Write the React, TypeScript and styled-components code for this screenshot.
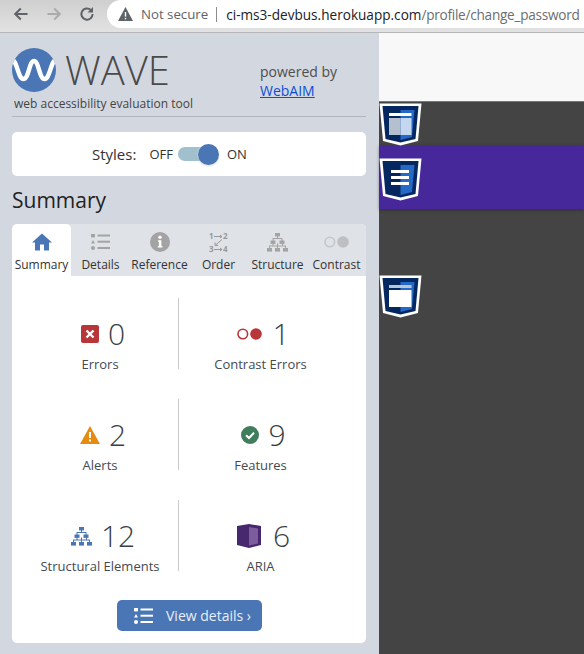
import React from 'react';
import styled, { createGlobalStyle } from 'styled-components';

const GlobalStyle = createGlobalStyle`
  html, body {
    margin: 0;
    padding: 0;
    height: 654px;
    overflow: hidden;
    background: #444;
    font-family: "Open Sans", "Liberation Sans", sans-serif;
  }
  * { box-sizing: border-box; }
`;

const TAB_COLOR = '#a3a3a3';
const BLUE = '#4a76b5';

const HomeIcon = () => (
  <svg width="20" height="18" viewBox="0 0 20 18">
    <path d="M10 0.5 L20 9.5 H17 V17.5 H12 V11.5 H8 V17.5 H3 V9.5 H0 Z" fill={BLUE} />
  </svg>
);

const ListIcon = ({ color, size = 19 }: { color: string; size?: number }) => (
  <svg width={size} height={(size * 16) / 19} viewBox="0 0 19 16" fill={color}>
    <rect x="0" y="0" width="4" height="3.4" />
    <path d="M2 6 L4 9.4 H0 Z" />
    <circle cx="2" cy="14" r="2" />
    <rect x="6.5" y="0.5" width="12.5" height="2" />
    <rect x="6.5" y="6.7" width="12.5" height="2" />
    <rect x="6.5" y="13" width="12.5" height="2" />
  </svg>
);

const InfoIcon = () => (
  <svg width="20" height="20" viewBox="0 0 20 20">
    <circle cx="10" cy="10" r="10" fill={TAB_COLOR} />
    <circle cx="10" cy="5.2" r="1.7" fill="#fff" />
    <path d="M8 8.2 H11.4 V14 H12.4 V15.6 H7.8 V14 H8.9 V9.8 H8 Z" fill="#fff" />
  </svg>
);

const OrderIcon = () => (
  <svg width="19" height="25" viewBox="0 -2 19 25">
    <text x="0" y="7" fontSize="8" fontWeight="700" fill="#999" fontFamily="Open Sans">1</text>
    <text x="14" y="7" fontSize="8" fontWeight="700" fill="#999" fontFamily="Open Sans">2</text>
    <text x="0" y="20" fontSize="8" fontWeight="700" fill="#999" fontFamily="Open Sans">3</text>
    <text x="14" y="20" fontSize="8" fontWeight="700" fill="#999" fontFamily="Open Sans">4</text>
    <g stroke="#999" strokeWidth="1" fill="none">
      <path d="M5 4.5 H13 M11 3 L13 4.5 L11 6" />
      <path d="M5 17.5 H13 M11 16 L13 17.5 L11 19" />
      <path d="M13 7.5 L6 13.5 M6 10.5 V13.5 H9" />
    </g>
  </svg>
);

const StructureIcon = ({ color, width = 21 }: { color: string; width?: number }) => (
  <svg width={width} height={(width * 19) / 21} viewBox="0 0 21 19" fill={color}>
    <rect x="8" y="0" width="5" height="3.4" />
    <rect x="3.5" y="7.5" width="5" height="3.4" />
    <rect x="12.5" y="7.5" width="5" height="3.4" />
    <rect x="0" y="15" width="5" height="3.6" />
    <rect x="8" y="15" width="5" height="3.6" />
    <rect x="16" y="15" width="5" height="3.6" />
    <path d="M10 3 H11 V5 H15.5 V8 H14.5 V6 H6.5 V8 H5.5 V5 H10 Z" />
    <path d="M5.5 10.5 H6.5 V12.5 H10 V10.5 H11 V12.5 H15 V10.5 H16 V12.5 H19 V15.5 H18 V13.5 H11 V15.5 H10 V13.5 H3 V15.5 H2 V12.5 H5.5 Z" />
  </svg>
);

const ContrastPair = ({ ring, dot, width }: { ring: string; dot: string; width: number }) => (
  <svg width={width} height={(width * 12) / 25} viewBox="0 0 25 12">
    <circle cx="5.8" cy="6" r="4.8" fill="none" stroke={ring} strokeWidth="1.6" />
    <circle cx="19" cy="6" r="5.8" fill={dot} />
  </svg>
);

const ErrorIcon = () => (
  <svg width="18" height="18" viewBox="0 0 18 18">
    <rect width="18" height="18" rx="2" fill="#b83639" />
    <path d="M5.5 5.5 L12.5 12.5 M12.5 5.5 L5.5 12.5" stroke="#fff" strokeWidth="2.4" />
  </svg>
);

const AlertIcon = () => (
  <svg width="20" height="18" viewBox="0 0 20 18">
    <path d="M10 0 L20 18 H0 Z" fill="#e58b12" />
    <rect x="9" y="6" width="2" height="6" fill="#fff" />
    <rect x="9" y="13.4" width="2" height="2" fill="#fff" />
  </svg>
);

const FeatureIcon = () => (
  <svg width="18" height="18" viewBox="0 0 18 18">
    <circle cx="9" cy="9" r="9" fill="#3f7d5c" />
    <path d="M5 9.2 L8 12 L13 6.8" fill="none" stroke="#fff" strokeWidth="2" />
  </svg>
);

const AriaIcon = () => (
  <svg width="24" height="24" viewBox="0 0 24 24">
    <path d="M0 2 L12 0 L24 2 V21 L12 24 L0 21 Z" fill="#47286f" />
    <path d="M12 3 L21 4.5 V19.5 L12 21.5 Z" fill="#7d5c9e" />
  </svg>
);

const WaveLogo = () => (
  <svg width="44" height="44" viewBox="0 0 44 44">
    <defs>
      <clipPath id="logoClip">
        <circle cx="22" cy="22" r="22" />
      </clipPath>
    </defs>
    <circle cx="22" cy="22" r="22" fill={BLUE} />
    <path
      d="M0 12 C5 12 6 31 11.5 31 C17 31 17 13 22 13 C27 13 27 31 32.5 31 C38 31 39 12 44 12"
      fill="none"
      stroke="#fff"
      strokeWidth="4.5"
      clipPath="url(#logoClip)"
    />
  </svg>
);

const Shield = ({ variant }: { variant: 'split' | 'lines' | 'window' }) => (
  <svg width="43" height="43" viewBox="0 0 43 43">
    <path d="M0.5 0.5 H42.5 L39 38 L21.5 42.5 L4 38 Z" fill="#fff" />
    <path d="M3.5 3 H39.5 L36.5 36 L21.5 39.5 L6.5 36 Z" fill="#04275f" />
    <path d="M21.5 7 H35.5 L33 34 L21.5 37 Z" fill="#2468c8" />
    {variant === 'split' && (
      <>
        <rect x="10" y="10" width="22.5" height="3" fill="#fff" />
        <rect x="10" y="15" width="11.5" height="17" fill="#b5c0cf" />
        <rect x="21.5" y="15" width="11" height="17" fill="#c3d8f0" />
      </>
    )}
    {variant === 'lines' && (
      <>
        <rect x="12" y="12" width="18" height="3" fill="#fff" />
        <rect x="12" y="18" width="18" height="3" fill="#fff" />
        <rect x="12" y="24" width="18" height="3" fill="#fff" />
      </>
    )}
    {variant === 'window' && (
      <>
        <rect x="10" y="10" width="22.5" height="3" fill="#b9c6d6" />
        <rect x="10" y="15" width="22.5" height="17" fill="#fff" />
      </>
    )}
  </svg>
);

const tabs = [
  { label: 'Summary', icon: <HomeIcon /> },
  { label: 'Details', icon: <ListIcon color={TAB_COLOR} /> },
  { label: 'Reference', icon: <InfoIcon /> },
  { label: 'Order', icon: <OrderIcon /> },
  { label: 'Structure', icon: <StructureIcon color={TAB_COLOR} /> },
  { label: 'Contrast', icon: <ContrastPair ring="#c4c7cb" dot="#bdbfc2" width={25} /> },
];

const stats = [
  { icon: <ErrorIcon />, count: 0, label: 'Errors', gap: 9 },
  { icon: <ContrastPair ring="#b83639" dot="#b83639" width={25} />, count: 1, label: 'Contrast Errors', gap: 10 },
  { icon: <AlertIcon />, count: 2, label: 'Alerts', gap: 9 },
  { icon: <FeatureIcon />, count: 9, label: 'Features', gap: 9 },
  { icon: <StructureIcon color={BLUE} />, count: 12, label: 'Structural Elements', gap: 9 },
  { icon: <AriaIcon />, count: 6, label: 'ARIA', gap: 12 },
];

const App = () => (
  <Page>
    <GlobalStyle />
    <BrowserBar>
      <NavIcon viewBox="0 0 16 16">
        <path d="M14.5 8 H2.5 M7.8 2.5 L2.2 8 L7.8 13.5" stroke="#5f6368" />
      </NavIcon>
      <NavIcon viewBox="0 0 16 16">
        <path d="M1.5 8 H13.5 M8.2 2.5 L13.8 8 L8.2 13.5" stroke="#a9abad" />
      </NavIcon>
      <NavIcon viewBox="0 0 16 16">
        <path d="M13.6 8 A5.6 5.6 0 1 1 11.8 3.9" stroke="#5f6368" />
        <path d="M14 1 V6.4 H8.6 Z" fill="#5f6368" />
      </NavIcon>
      <AddressPill>
        <svg width="15" height="14" viewBox="0 0 15 14">
          <path d="M7.5 0 L15 14 H0 Z" fill="#5f6368" />
          <rect x="6.8" y="5" width="1.4" height="4.6" fill="#fff" />
          <rect x="6.8" y="10.8" width="1.4" height="1.5" fill="#fff" />
        </svg>
        <NotSecure>Not secure</NotSecure>
        <PillDivider />
        <Url>
          ci-ms3-devbus.herokuapp.com<UrlPath>/profile/change_password</UrlPath>
        </Url>
      </AddressPill>
    </BrowserBar>
    <Main>
      <Sidebar>
        <Header>
          <Brand>
            <LogoRow>
              <WaveLogo />
              <WaveTitle>WAVE</WaveTitle>
            </LogoRow>
            <Tagline>web accessibility evaluation tool</Tagline>
          </Brand>
          <Powered>
            powered by
            <br />
            <PoweredLink href="#">WebAIM</PoweredLink>
          </Powered>
        </Header>
        <StylesCard>
          <StylesLabel>Styles:</StylesLabel>
          <ToggleText>OFF</ToggleText>
          <Toggle>
            <Knob />
          </Toggle>
          <ToggleText>ON</ToggleText>
        </StylesCard>
        <Heading>Summary</Heading>
        <Panel>
          <TabBar>
            {tabs.map((tab, index) => (
              <Tab key={tab.label} $active={index === 0}>
                <TabIcon>{tab.icon}</TabIcon>
                <TabLabel>{tab.label}</TabLabel>
              </Tab>
            ))}
          </TabBar>
          <StatGrid>
            {stats.map((stat, index) => (
              <Stat key={stat.label} $left={index % 2 === 0}>
                <StatTop $gap={stat.gap}>
                  {stat.icon}
                  <Count>{stat.count}</Count>
                </StatTop>
                <StatLabel>{stat.label}</StatLabel>
              </Stat>
            ))}
          </StatGrid>
          <ButtonRow>
            <DetailsButton>
              <ListIcon color="#fff" />
              View details ›
            </DetailsButton>
          </ButtonRow>
        </Panel>
      </Sidebar>
      <Viewport>
        <TopStrip />
        <PurpleBand />
        <ShieldBadge $top={2}>
          <Shield variant="split" />
        </ShieldBadge>
        <ShieldBadge $top={57}>
          <Shield variant="lines" />
        </ShieldBadge>
        <ShieldBadge $top={174}>
          <Shield variant="window" />
        </ShieldBadge>
      </Viewport>
    </Main>
  </Page>
);

export default App;

const Page = styled.div`
  width: 584px;
  height: 654px;
  display: flex;
  flex-direction: column;
  overflow: hidden;
`;

const BrowserBar = styled.div`
  height: 33px;
  flex: none;
  display: flex;
  align-items: flex-start;
  padding: 6px 0 0 13px;
  gap: 17px;
  background: linear-gradient(#cfcfcf, #e2e2e2);
  border-bottom: 1px solid #b4b6b8;
  overflow: hidden;
`;

const NavIcon = styled.svg`
  width: 16px;
  height: 16px;
  flex: none;
  fill: none;
  stroke-width: 2;
`;

const AddressPill = styled.div`
  flex: none;
  width: 480px;
  height: 28px;
  margin: -6px 0 0 -5px;
  padding: 0 0 0 11px;
  display: flex;
  align-items: center;
  background: #fff;
  border-radius: 14px 0 0 14px;
  white-space: nowrap;
`;

const NotSecure = styled.span`
  color: #5f6368;
  margin-left: 8px;
  font-size: 13.25px;
`;

const PillDivider = styled.span`
  width: 1px;
  height: 15px;
  background: #8a8c8f;
  margin: 0 9px 0 8px;
`;

const Url = styled.span`
  color: #202124;
  font-size: 13.6px;
`;

const UrlPath = styled.span`
  color: #6b6e72;
  letter-spacing: -0.25px;
`;

const Main = styled.div`
  flex: 1;
  display: flex;
  min-height: 0;
`;

const Sidebar = styled.div`
  width: 379px;
  flex: none;
  background: #d3d8e0;
  padding: 15px 13px 0 12px;
`;

const Header = styled.div`
  height: 69px;
  display: flex;
  justify-content: space-between;
  border-bottom: 1px solid #b2b5b9;
`;

const Brand = styled.div`
  display: flex;
  flex-direction: column;
`;

const LogoRow = styled.div`
  display: flex;
  align-items: center;
  gap: 9px;
  height: 44px;
`;

const WaveTitle = styled.div`
  font-size: 40px;
  font-weight: 300;
  color: #4a4a4a;
  line-height: 44px;
`;

const Tagline = styled.div`
  margin: 4px 0 0 2px;
  font-size: 12px;
  line-height: 16px;
  color: #444;
`;

const Powered = styled.div`
  margin: 14px 28px 0 0;
  width: 78px;
  font-size: 14px;
  line-height: 19px;
  color: #4d4d4d;
`;

const PoweredLink = styled.a`
  color: #0b4fd8;
`;

const StylesCard = styled.div`
  margin-top: 15px;
  height: 44px;
  display: flex;
  align-items: center;
  padding-left: 80px;
  background: #fff;
  border-radius: 5px;
  color: #333;
`;

const StylesLabel = styled.span`
  font-size: 15px;
  margin-right: 13px;
`;

const ToggleText = styled.span`
  font-size: 13px;
`;

const Toggle = styled.div`
  position: relative;
  width: 32px;
  height: 14px;
  margin: 0 17px 0 5px;
  border-radius: 7px;
  background: #9fc0cc;
`;

const Knob = styled.div`
  position: absolute;
  top: -3.5px;
  right: -9px;
  width: 21px;
  height: 21px;
  border-radius: 50%;
  background: ${BLUE};
  box-shadow: 0 0 2px #fff, 0 1px 2px rgba(0, 0, 0, 0.2);
`;

const Heading = styled.h2`
  margin: 10px 0 9px;
  font-size: 21px;
  font-weight: 400;
  line-height: 29px;
  color: #222;
`;

const Panel = styled.div`
  height: 419px;
  background: #fff;
  border-radius: 5px;
  overflow: hidden;
  display: flex;
  flex-direction: column;
`;

const TabBar = styled.div`
  height: 52px;
  flex: none;
  display: flex;
  background: #dfe2e7;
`;

const Tab = styled.div<{ $active: boolean }>`
  width: 59px;
  display: flex;
  flex-direction: column;
  align-items: center;
  background: ${(p) => (p.$active ? '#fff' : 'transparent')};
  border-radius: 5px 5px 0 0;
`;

const TabIcon = styled.div`
  height: 22px;
  margin-top: 7px;
  display: flex;
  align-items: center;
  justify-content: center;
`;

const TabLabel = styled.div`
  font-size: 12px;
  line-height: 15px;
  margin-top: 4px;
  color: #333;
  white-space: nowrap;
`;

const StatGrid = styled.div`
  margin-top: 22px;
  display: grid;
  grid-template-columns: 167px 1fr;
  grid-auto-rows: 71px;
  row-gap: 30px;
`;

const Stat = styled.div<{ $left: boolean }>`
  display: flex;
  flex-direction: column;
  align-items: center;
  justify-content: flex-end;
  padding: ${(p) => (p.$left ? '0 0 0 10px' : '0 24px 0 0')};
  border-right: ${(p) => (p.$left ? '1px solid #c9c9c9' : 'none')};
`;

const StatTop = styled.div<{ $gap: number }>`
  height: 40px;
  margin-left: 6px;
  display: flex;
  align-items: center;
  gap: ${(p) => p.$gap}px;
`;

const Count = styled.span`
  font-size: 30px;
  line-height: 40px;
  font-weight: 300;
  color: #3a3f47;
`;

const StatLabel = styled.div`
  margin: 2px 0 -3px;
  font-size: 13px;
  line-height: 16px;
  color: #444a52;
`;

const ButtonRow = styled.div`
  margin-top: 29px;
  display: flex;
  padding-left: 105px;
`;

const DetailsButton = styled.div`
  width: 145px;
  height: 31px;
  display: flex;
  align-items: center;
  gap: 13px;
  padding-left: 17px;
  background: ${BLUE};
  border-radius: 5px;
  color: #e8eef7;
  font-size: 14px;
`;

const Viewport = styled.div`
  flex: 1;
  position: relative;
  background: #444;
`;

const TopStrip = styled.div`
  height: 69px;
  background: #f8f8f8;
  border-bottom: 1px solid #777;
`;

const PurpleBand = styled.div`
  height: 64px;
  margin-top: 43px;
  background: #46289b;
  box-shadow: 0 1px 3px rgba(0, 0, 0, 0.35);
`;

const ShieldBadge = styled.div<{ $top: number }>`
  position: absolute;
  left: 0;
  top: ${(p) => p.$top + 68}px;
  line-height: 0;
`;
